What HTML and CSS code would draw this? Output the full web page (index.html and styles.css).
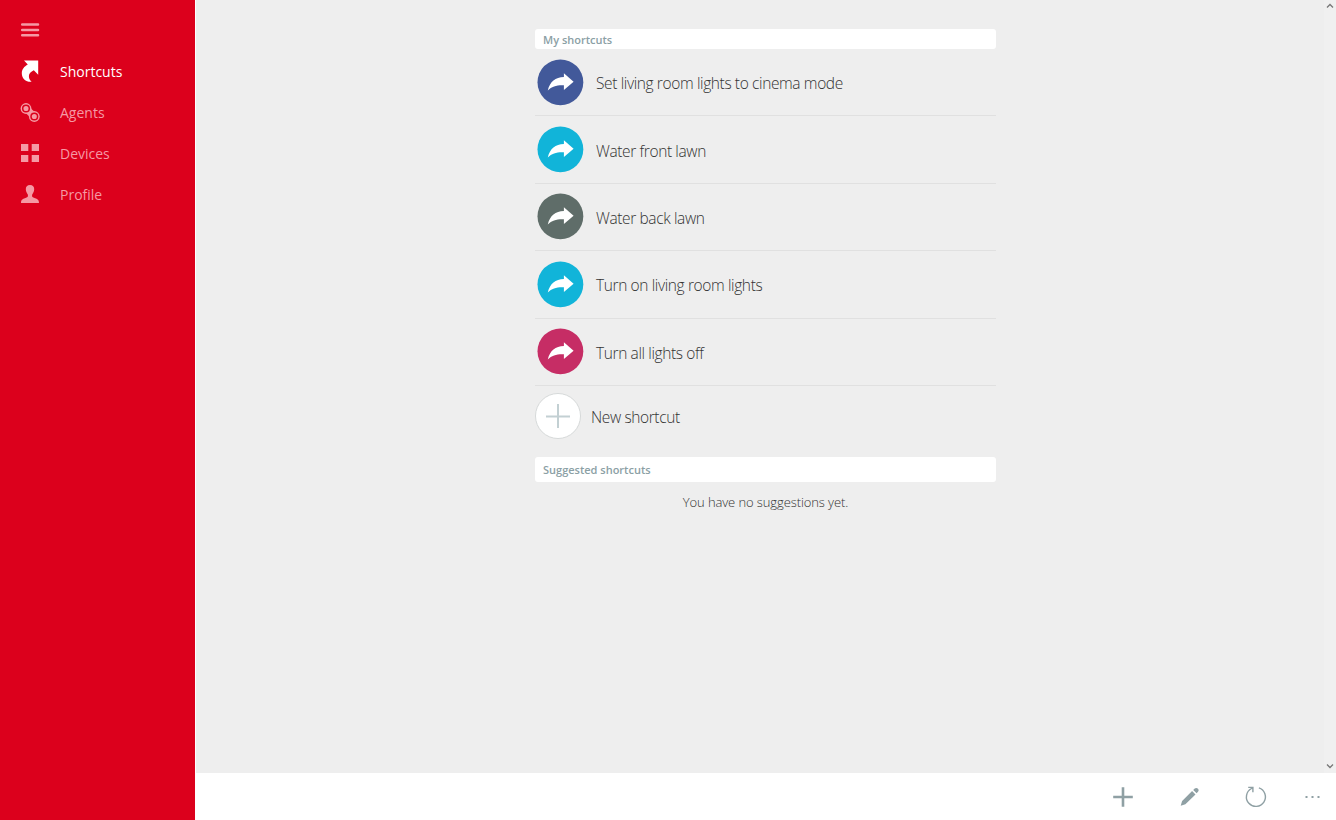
FILE: index.html
```html
<!DOCTYPE html>
<html lang="en">
<head>
    <meta charset="UTF-8">
    <meta name="viewport" content="width=device-width, initial-scale=1.0">
    <title>Shortcuts</title>
    <link rel="stylesheet" href="styles.css">
</head>
<body>
    <svg width="0" height="0" class="symbols">
        <symbol id="share" viewBox="0 0 47 47">
            <circle cx="23.4" cy="23.3" r="22.9" fill="currentColor"/>
            <path d="M10.8 31.4 C12.9 22.9 18.4 18.1 26.9 18.1 V14.3 L36.6 22.7 L26.9 31 V26.2 C19.9 25.9 14.9 27.2 10.8 31.4 Z" fill="#fff"/>
        </symbol>
    </svg>
    <nav class="sidebar">
        <button class="menu-button" aria-label="Menu">
            <svg width="22" height="22" viewBox="0 0 22 22">
                <path d="M3.2 5.5 H19 M3.2 11 H19 M3.2 16.3 H19" stroke="currentColor" stroke-width="2.5" stroke-linecap="round"/>
            </svg>
        </button>
        <a class="nav-item active">
            <svg width="22" height="24" viewBox="0 0 22 24">
                <path d="M5 0.5 H19.2 V14.8 L14.8 10.2 C11.8 11.6 9.9 13.4 9.9 16 C9.9 18.4 10.8 20.2 12.6 21.8 C7 22.3 2.8 18.4 2.8 13.2 C2.8 9.2 5.2 6.4 8.8 4.4 Z" fill="currentColor"/>
            </svg>
            <span>Shortcuts</span>
        </a>
        <a class="nav-item">
            <svg width="22" height="24" viewBox="0 0 22 24">
                <path d="M7 7.5 L15.3 15.5" stroke="currentColor" stroke-width="7"/>
                <circle cx="7" cy="7.5" r="5.4" fill="currentColor"/>
                <circle cx="15.3" cy="15.5" r="5.4" fill="currentColor"/>
                <g fill="none" stroke="#dc001c" stroke-width="1.5">
                    <circle cx="7" cy="7.5" r="3.3"/>
                    <circle cx="15.3" cy="15.5" r="3.3"/>
                </g>
            </svg>
            <span>Agents</span>
        </a>
        <a class="nav-item">
            <svg width="22" height="24" viewBox="0 0 22 24">
                <path d="M2 2 H9.3 V9 H2 Z M12.7 2 H20 V9 H12.7 Z M2 13 H9.3 V20 H2 Z M12.7 13 H20 V20 H12.7 Z" fill="currentColor"/>
            </svg>
            <span>Devices</span>
        </a>
        <a class="nav-item">
            <svg width="22" height="24" viewBox="0 0 22 24">
                <path d="M11 2 C13.800 2 15.300 3.700 15.200 6.200 C15.100 8.600 14 10.200 13.200 11.400 C12.800 13.500 13.200 14.100 15 14.800 C18 15.900 20 16.500 20 20 H2 C2 16.500 4 15.900 7 14.800 C8.800 14.100 9.200 13.500 8.800 11.400 C8 10.200 6.900 8.600 6.800 6.200 C6.700 3.700 8.200 2 11 2 Z" fill="currentColor"/>
            </svg>
            <span>Profile</span>
        </a>
    </nav>
    <div class="page">
        <main class="content">
            <div class="column">
                <h2 class="section-title">My shortcuts</h2>
                <ul class="shortcuts">
                    <li class="shortcut">
                        <svg class="badge blue"><use href="#share"/></svg>
                        <span>Set living room lights to cinema mode</span>
                    </li>
                    <li class="shortcut">
                        <svg class="badge cyan"><use href="#share"/></svg>
                        <span>Water front lawn</span>
                    </li>
                    <li class="shortcut">
                        <svg class="badge gray"><use href="#share"/></svg>
                        <span>Water back lawn</span>
                    </li>
                    <li class="shortcut">
                        <svg class="badge cyan"><use href="#share"/></svg>
                        <span>Turn on living room lights</span>
                    </li>
                    <li class="shortcut">
                        <svg class="badge pink"><use href="#share"/></svg>
                        <span>Turn all lights off</span>
                    </li>
                </ul>
                <div class="new-shortcut">
                    <svg width="46" height="46" viewBox="0 0 46 46">
                        <circle cx="23" cy="23" r="22.5" fill="#fff" stroke="#d6d9d9"/>
                        <path d="M23 11 V35 M11 23.5 H35" stroke="#c3d0d3" stroke-width="2"/>
                    </svg>
                    <span>New shortcut</span>
                </div>
                <h2 class="section-title suggested">Suggested shortcuts</h2>
                <p class="empty">You have no suggestions yet.</p>
            </div>
            <div class="scrollbar">
                <svg width="12" height="12" viewBox="0 0 12 12"><path d="M3 7.5 L6 4.5 L9 7.5"/></svg>
                <svg width="12" height="12" viewBox="0 0 12 12"><path d="M3 3.5 L6 6.5 L9 3.5"/></svg>
            </div>
        </main>
        <footer class="toolbar">
            <button aria-label="Add">
                <svg width="24" height="24" viewBox="0 0 24 24">
                    <path d="M12 2.2 V21.8 M2.2 12 H21.8" stroke="currentColor" stroke-width="2.6"/>
                </svg>
            </button>
            <button aria-label="Edit">
                <svg width="24" height="24" viewBox="0 0 24 24">
                    <path d="M3.7 20.8 L5.1 16 L15.1 6 L18.5 9.4 L8.4 19.3 Z M16.2 4.9 L17.7 3.5 C18.8 2.6 20.2 2.9 21 3.7 C21.8 4.6 21.9 5.8 21 6.8 L19.6 8.3 Z" fill="currentColor"/>
                </svg>
            </button>
            <button aria-label="Refresh">
                <svg width="24" height="24" viewBox="0 0 24 24">
                    <path d="M14.9 2.9 A9.5 9.5 0 1 1 7.5 3.5 L8.8 2.5 M4.2 2.4 H8.9 V7.2" fill="none" stroke="currentColor" stroke-width="1.4"/>
                </svg>
            </button>
            <button class="more" aria-label="More">
                <svg width="24" height="24" viewBox="0 0 24 24">
                    <path d="M5.5 11 H7.5 V13 H5.500 Z M11.500 11 H13.500 V13 H11.500 Z M17.500 11 H19.500 V13 H17.500 Z" fill="currentColor"/>
                </svg>
            </button>
        </footer>
    </div>
</body>
</html>
```
FILE: styles.css
```css
* {
    box-sizing: border-box;
}
body {
    margin: 0;
    height: 820px;
    display: flex;
    overflow: hidden;
    background: #eee;
    color: #333;
    font-family: "Open Sans", "Noto Sans", sans-serif;
}
.symbols {
    position: absolute;
}
button {
    display: flex;
    padding: 0;
    border: none;
    background: none;
    color: inherit;
}
.sidebar {
    width: 195px;
    padding: 19px 0 0 19px;
    background: #dc001c;
    color: #f599a4;
}
.menu-button {
    margin-bottom: 10px;
}
.nav-item {
    display: flex;
    align-items: center;
    gap: 19px;
    height: 41px;
    font-size: 14px;
    white-space: nowrap;
}
.nav-item.active {
    color: #fff;
}
.page {
    flex: 1;
    display: flex;
    flex-direction: column;
    border-left: 1px solid #fff;
}
.content {
    height: 773px;
    display: flex;
    justify-content: flex-end;
}
.column {
    width: 461px;
    margin-right: 328px;
    padding-top: 29px;
}
.section-title {
    height: 20px;
    margin: 0;
    padding-left: 8px;
    border-radius: 3px;
    background: #fff;
    color: #8ba0a5;
    font-size: 11px;
    font-weight: 600;
    line-height: 21px;
}
.section-title.suggested {
    height: 25px;
    margin-top: 18px;
    line-height: 26px;
}
.shortcuts {
    margin: 0;
    padding: 0;
    list-style: none;
}
.shortcut {
    display: flex;
    align-items: center;
    gap: 12px;
    height: 67.4px;
    padding-left: 2px;
    border-bottom: 1px solid #e0e0e0;
}
.shortcut span,
.new-shortcut span {
    font-size: 15.5px;
    font-weight: 300;
    line-height: 20px;
    letter-spacing: -0.38px;
    padding-top: 2px;
    white-space: nowrap;
}
.badge {
    width: 47px;
    height: 47px;
}
.blue {
    color: #42599a;
}
.cyan {
    color: #11b4d9;
}
.gray {
    color: #5f6d69;
}
.pink {
    color: #c62d65;
}
.new-shortcut {
    display: flex;
    align-items: center;
    gap: 10px;
    height: 46px;
    margin-top: 7px;
}
.empty {
    margin: 10px 0 0;
    text-align: center;
    font-size: 13px;
    font-weight: 300;
    line-height: 20px;
    letter-spacing: -0.1px;
}
.scrollbar {
    width: 12px;
    display: flex;
    flex-direction: column;
    justify-content: space-between;
    background: #f0f0f0;
}
.scrollbar path {
    fill: none;
    stroke: #777;
    stroke-width: 1.3;
}
.toolbar {
    flex: 1;
    display: flex;
    justify-content: flex-end;
    align-items: center;
    gap: 42.3px;
    padding: 0 12px 0 0;
    background: #fff;
    color: #8fa0a4;
}
.toolbar .more {
    margin-left: -10px;
}
```
